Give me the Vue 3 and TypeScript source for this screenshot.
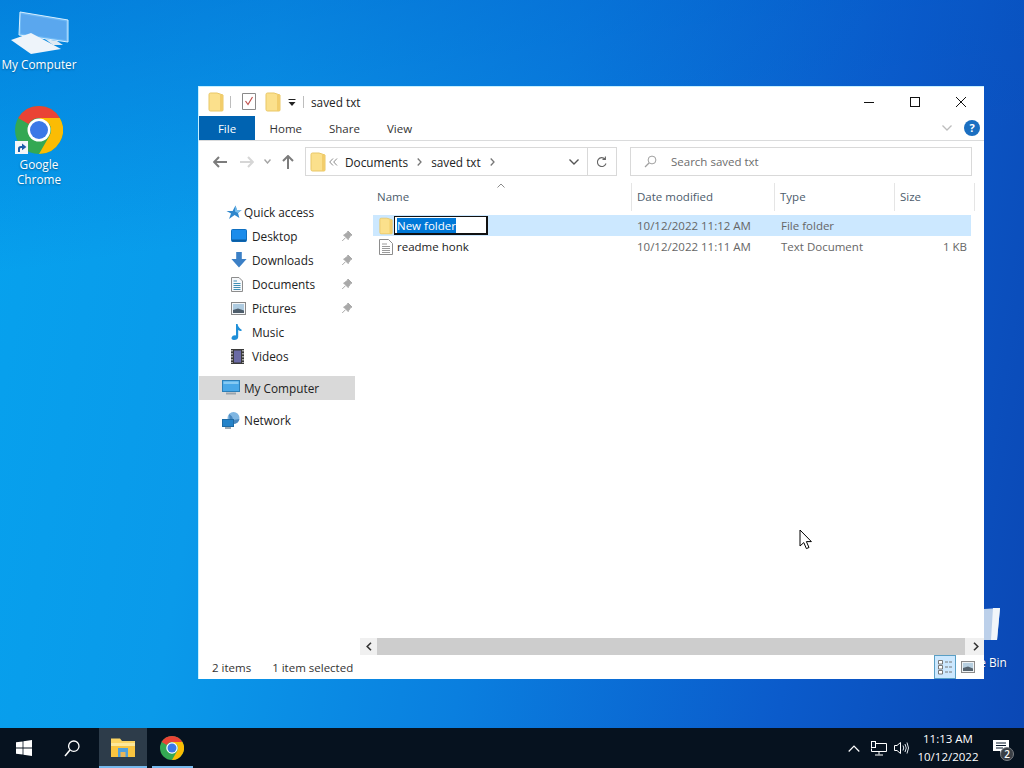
<script setup lang="ts">
const quickItems = [
  { name: 'Desktop', icon: 'desktop', pinned: true },
  { name: 'Downloads', icon: 'downloads', pinned: true },
  { name: 'Documents', icon: 'documents', pinned: true },
  { name: 'Pictures', icon: 'pictures', pinned: true },
  { name: 'Music', icon: 'music', pinned: false },
  { name: 'Videos', icon: 'videos', pinned: false },
]

const columns = [
  { label: 'Name', width: 259 },
  { label: 'Date modified', width: 143 },
  { label: 'Type', width: 120 },
  { label: 'Size', width: 80 },
]
</script>

<template>
  <div class="desktop">
    <svg width="0" height="0" class="defs">
      <symbol id="folder" viewBox="0 0 16 20">
        <path d="M1 2.5 Q1 1 2.5 1 H9 L15 3 V18 Q15 19 14 19 H2.5 Q1 19 1 17.5 Z" fill="#fbe08c" stroke="#e9c766" stroke-width="1" />
        <path d="M12 2.5 L15 3 V19 H12 Z" fill="#f2cd6b" />
      </symbol>
      <symbol id="pin" viewBox="0 0 12 12">
        <path d="M7 1 L11 5 L9.6 5.6 L7.6 8.6 L7.2 9.6 L2.6 5 L3.6 4.6 L6.4 2.4 Z M4.4 7.8 L1.2 11" fill="#a9a9a9" stroke="#a9a9a9" stroke-width="1" />
      </symbol>
      <symbol id="chrome" viewBox="0 0 48 48">
        <circle cx="24" cy="24" r="24" fill="#34a853" />
        <path d="M24 0 A24 24 0 0 1 44.8 12 H24 A12 12 0 0 0 13.6 18 L3.2 12 A24 24 0 0 1 24 0 Z" fill="#ea4335" />
        <path d="M44.8 12 A24 24 0 0 1 24 48 L34.4 30 A12 12 0 0 0 34.4 18 L24 12 Z" fill="#fbbc04" />
        <circle cx="24" cy="24" r="11.5" fill="#fff" />
        <circle cx="24" cy="24" r="9" fill="#3b78e7" />
      </symbol>
    </svg>

    <div class="desk-icon computer-icon">
      <svg width="62" height="44" viewBox="0 0 62 44">
        <path d="M11 1 L59 9 V31 L10 24 Z" fill="#6db8f5" stroke="#d8efff" stroke-width="1" />
        <path d="M12 3 L57 10.5 V29 L12 22.5 Z" fill="#5aa7ee" />
        <path d="M36 28 L48 30 L54 34 L44 34 Z" fill="#dfe9f2" />
        <path d="M2 36 L22 29 L52 45 L22 50 Z" fill="#eef4fa" transform="translate(0 -7)" />
      </svg>
      <span>My Computer</span>
    </div>

    <div class="desk-icon chrome-icon">
      <div class="chrome-wrap">
        <svg width="48" height="48"><use href="#chrome" /></svg>
        <svg class="shortcut" width="13" height="13" viewBox="0 0 13 13">
          <rect width="13" height="13" fill="#f4f6f8" />
          <path d="M3 11 V7.5 Q3 5 6 5 H7 V2.6 L11.4 6 L7 9.2 V7 H6 Q5 7 5 8.4 V11 Z" fill="#1c5ea8" />
        </svg>
      </div>
      <span>Google<br />Chrome</span>
    </div>

    <div class="desk-icon bin-icon">
      <svg width="40" height="44" viewBox="0 0 40 44">
        <path d="M4 2 L36 0 L33 32 L8 32 Z" fill="#dce7f2" fill-opacity="0.85" />
        <path d="M29 0 L36 0 L33 32 L27 32 Z" fill="#f2f6fa" />
      </svg>
      <span>Recycle Bin</span>
    </div>

    <section class="window">
      <header class="titlebar">
        <svg class="qa-folder" width="16" height="20"><use href="#folder" /></svg>
        <i class="qa-sep"></i>
        <svg class="qa-props" width="14" height="17" viewBox="0 0 14 17">
          <path d="M0.5 0.5 H13.5 V16.5 H0.5 Z" fill="#fff" stroke="#8a8a8a" />
          <path d="M3.5 8 L6 11.5 L10.5 4" fill="none" stroke="#c0504d" stroke-width="1.2" />
        </svg>
        <svg class="qa-folder2" width="16" height="20"><use href="#folder" /></svg>
        <svg class="qa-arrow" width="8" height="8" viewBox="0 0 8 8">
          <path d="M0.5 0.5 H7.5" stroke="#222" />
          <path d="M0.5 3 H7.5 L4 7 Z" fill="#222" />
        </svg>
        <i class="qa-sep last"></i>
        <span class="win-title">saved txt</span>
        <div class="win-controls">
          <svg width="12" height="12" viewBox="0 0 12 12"><path d="M1 6.5 H11" stroke="#111" /></svg>
          <svg width="12" height="12" viewBox="0 0 12 12"><rect x="1.5" y="1.5" width="9" height="9" fill="none" stroke="#111" /></svg>
          <svg width="12" height="12" viewBox="0 0 12 12"><path d="M1 1 L11 11 M11 1 L1 11" stroke="#111" /></svg>
        </div>
      </header>

      <nav class="ribbon">
        <span class="tab file">File</span>
        <span class="tab">Home</span>
        <span class="tab">Share</span>
        <span class="tab">View</span>
        <svg class="ribbon-chevron" width="10" height="6" viewBox="0 0 10 6"><path d="M0.5 0.5 L5 5 L9.5 0.5" fill="none" stroke="#bdbdbd" stroke-width="1.3" /></svg>
        <span class="help">?</span>
      </nav>

      <div class="addressbar">
        <div class="nav-buttons">
          <svg width="14" height="12" viewBox="0 0 14 12"><path d="M6 1 L1.2 6 L6 11 M1.5 6 H14" fill="none" stroke="#7c7c7c" stroke-width="2" /></svg>
          <svg width="14" height="12" viewBox="0 0 14 12"><path d="M8 1 L12.8 6 L8 11 M12.5 6 H0" fill="none" stroke="#d6d6d6" stroke-width="2" /></svg>
          <svg width="7" height="5" viewBox="0 0 7 5"><path d="M0.5 0.5 L3.5 4 L6.5 0.5" fill="none" stroke="#a4a4a4" stroke-width="1.4" /></svg>
          <svg width="12" height="14" viewBox="0 0 12 14"><path d="M1 6 L6 1 L11 6 M6 1.5 V14" fill="none" stroke="#7c7c7c" stroke-width="2" /></svg>
        </div>
        <div class="address">
          <svg width="16" height="20"><use href="#folder" /></svg>
          <svg class="crumb-more" width="9" height="8" viewBox="0 0 9 8"><path d="M4 0.5 L0.7 4 L4 7.5 M8 0.5 L4.7 4 L8 7.5" fill="none" stroke="#8a8a8a" /></svg>
          <span class="crumb">Documents</span>
          <svg class="crumb-sep" width="5" height="8" viewBox="0 0 5 8"><path d="M0.7 0.5 L4 4 L0.7 7.5" fill="none" stroke="#777" stroke-width="1.3" /></svg>
          <span class="crumb">saved txt</span>
          <svg class="crumb-sep" width="5" height="8" viewBox="0 0 5 8"><path d="M0.7 0.5 L4 4 L0.7 7.5" fill="none" stroke="#777" stroke-width="1.3" /></svg>
          <svg class="addr-down" width="10" height="6" viewBox="0 0 10 6"><path d="M0.5 0.5 L5 5 L9.5 0.5" fill="none" stroke="#555" stroke-width="1.4" /></svg>
          <span class="addr-refresh">
            <svg width="12" height="12" viewBox="0 0 12 12"><path d="M10 7.5 A4.4 4.4 0 1 1 9 3 M9.4 0.5 V3.4 H6.5" fill="none" stroke="#666" stroke-width="1.1" /></svg>
          </span>
        </div>
        <div class="search">
          <svg width="13" height="13" viewBox="0 0 13 13"><circle cx="8" cy="5" r="3.9" fill="none" stroke="#a0a0a0" /><path d="M5 8 L1 12" stroke="#a0a0a0" stroke-width="1.2" /></svg>
          <span>Search saved txt</span>
        </div>
      </div>

      <div class="main">
        <aside class="sidebar">
          <div class="nav-row group">
            <svg width="16" height="15" viewBox="0 0 16 15"><path d="M9.5 0.5 L11 5 H15.6 L12 8 L13.4 13 L8.6 10 L3 14 L5 8.6 L0.5 6 H6.6 Z" fill="#2f87cc" /><path d="M9.5 0.5 L11 5 H15.6 L12 8 L9 6.5 Z" fill="#7cc0ee" /></svg>
            <span>Quick access</span>
          </div>
          <div v-for="item in quickItems" :key="item.name" class="nav-row sub">
            <svg v-if="item.icon === 'desktop'" width="16" height="14" viewBox="0 0 16 14"><rect x="0.5" y="0.5" width="15" height="12" rx="1" fill="#1b8ceb" stroke="#0f6fc0" /><path d="M1 11.5 H15" stroke="#0a5da3" stroke-width="2" /></svg>
            <svg v-else-if="item.icon === 'downloads'" width="16" height="16" viewBox="0 0 16 16"><path d="M5.2 0 H10.8 V7 H15.6 L8 15.5 L0.4 7 H5.2 Z" fill="#3c80c6" /></svg>
            <svg v-else-if="item.icon === 'documents'" width="12" height="15" viewBox="0 0 12 15"><path d="M0.5 0.5 H8 L11.5 4 V14.5 H0.5 Z" fill="#f6f8fa" stroke="#8d8d8d" /><path d="M2.5 4 H6 M2.5 6.5 H9.5 M2.5 8.5 H9.5 M2.5 10.5 H9.5 M2.5 12.5 H9.5" stroke="#3f8fb4" /></svg>
            <svg v-else-if="item.icon === 'pictures'" width="15" height="13" viewBox="0 0 15 13"><rect x="0.5" y="0.5" width="14" height="12" fill="#f4f6f8" stroke="#888" /><rect x="2" y="2" width="11" height="9" fill="#aecbe0" /><path d="M2 8 L7 6.5 L13 8.5 V11 H2 Z" fill="#4d5d6b" /></svg>
            <svg v-else-if="item.icon === 'music'" width="12" height="16" viewBox="0 0 12 16"><path d="M5 0 H6.6 Q7 3.5 11 6 Q10 8 7.2 6 V13 Q7 16 3 16 Q0 15.6 0.6 13.4 Q1.4 11 5 11.4 Z" fill="#1f8fd8" /></svg>
            <svg v-else width="13" height="15" viewBox="0 0 13 15"><rect width="13" height="15" fill="#3a3a3a" /><rect x="3" y="1.5" width="7" height="12" fill="#6a6aa5" /><path d="M1 1 V14 M12 1 V14" stroke="#d4d4d4" stroke-dasharray="1.5 1.5" stroke-width="1.4" /></svg>
            <span>{{ item.name }}</span>
            <svg v-if="item.pinned" class="pin" width="12" height="12"><use href="#pin" /></svg>
          </div>
          <div class="nav-row group computer">
            <svg width="18" height="16" viewBox="0 0 18 16"><rect x="0.5" y="0.5" width="17" height="11" fill="#49a8e8" stroke="#2c7fb8" /><rect x="1.5" y="1.5" width="15" height="2.5" fill="#86caf3" /><path d="M4 13.5 H14" stroke="#9aa4ad" stroke-width="2" /></svg>
            <span>My Computer</span>
          </div>
          <div class="nav-row group network">
            <svg width="18" height="17" viewBox="0 0 18 17"><circle cx="11.5" cy="6" r="6" fill="#7fb6e2" /><path d="M7 2 Q11 4 11 8 L17.4 7 A6 6 0 0 1 8 11 Z" fill="#4a88bf" /><rect x="0.5" y="7.5" width="11" height="7" fill="#2583c9" stroke="#1e6ba5" /><path d="M3 16 H9" stroke="#7d8b96" stroke-width="1.5" /></svg>
            <span>Network</span>
          </div>
        </aside>

        <div class="content">
          <div class="col-header">
            <svg class="sort" width="8" height="5" viewBox="0 0 8 5"><path d="M0.5 4.5 L4 1 L7.5 4.5" fill="none" stroke="#8a8a8a" /></svg>
            <div v-for="col in columns" :key="col.label" class="col" :style="{ width: col.width + 'px' }">{{ col.label }}</div>
          </div>

          <div class="file-row selected">
            <div class="f-name">
              <svg width="14" height="18" viewBox="0 0 16 20"><use href="#folder" /></svg>
              <div class="rename"><span>New folder</span></div>
            </div>
            <div class="f-date">10/12/2022 11:12 AM</div>
            <div class="f-type">File folder</div>
            <div class="f-size"></div>
          </div>
          <div class="file-row">
            <div class="f-name">
              <svg width="14" height="16" viewBox="0 0 14 16"><path d="M0.5 0.5 H9.5 L13.5 4.5 V15.5 H0.5 Z" fill="#fff" stroke="#8d8d8d" /><path d="M3 5 H8 M3 7.5 H11 M3 9.5 H11 M3 11.5 H11 M3 13.5 H11" stroke="#9a9a9a" /></svg>
              <span class="plain">readme honk</span>
            </div>
            <div class="f-date">10/12/2022 11:11 AM</div>
            <div class="f-type">Text Document</div>
            <div class="f-size">1 KB</div>
          </div>

          <div class="hscroll">
            <span class="sb-btn"><svg width="6" height="9" viewBox="0 0 6 9"><path d="M5 0.7 L1.2 4.5 L5 8.3" fill="none" stroke="#333" stroke-width="1.6" /></svg></span>
            <div class="thumb"></div>
            <span class="sb-btn"><svg width="6" height="9" viewBox="0 0 6 9"><path d="M1 0.7 L4.8 4.5 L1 8.3" fill="none" stroke="#333" stroke-width="1.6" /></svg></span>
          </div>
        </div>
      </div>

      <footer class="statusbar">
        <span class="count">2 items</span>
        <span>1 item selected</span>
        <div class="views">
          <span class="view active">
            <svg width="17" height="16" viewBox="0 0 17 16"><path d="M1.5 1.5 H5.5 V5 H1.5 Z M1.5 6.5 H5.5 V10 H1.5 Z M1.5 11.5 H5.5 V15 H1.5 Z" fill="#fff" stroke="#777" /><path d="M8 3 H16 M8 8 H16 M8 13 H16" stroke="#777" stroke-dasharray="3 1" /></svg>
          </span>
          <span class="view">
            <svg width="14" height="12" viewBox="0 0 14 12"><rect x="0.5" y="0.5" width="13" height="11" fill="#eef2f5" stroke="#8a8a8a" /><rect x="2" y="2" width="10" height="8" fill="#b7cfe0" /><path d="M2 7 L7 5.5 L12 7.5 V10 H2 Z" fill="#56636e" /></svg>
          </span>
        </div>
      </footer>
    </section>

    <svg class="cursor" width="14" height="21" viewBox="0 0 14 21">
      <path d="M1 1 V17 L4.8 13.6 L7.4 19.6 L10 18.5 L7.4 12.6 H12.4 Z" fill="#fff" stroke="#000" stroke-width="1" />
    </svg>

    <footer class="taskbar">
      <span class="tb-btn start">
        <svg width="16" height="16" viewBox="0 0 16 16"><path d="M0 2.3 L6.6 1.4 V7.5 H0 Z M7.4 1.3 L16 0 V7.5 H7.4 Z M0 8.4 H6.6 V14.6 L0 13.7 Z M7.4 8.4 H16 V16 L7.4 14.7 Z" fill="#fff" /></svg>
      </span>
      <span class="tb-btn search-btn">
        <svg width="16" height="17" viewBox="0 0 16 17"><circle cx="9.8" cy="6.2" r="5.2" fill="none" stroke="#fff" stroke-width="1.3" /><path d="M6 10 L1 16" stroke="#fff" stroke-width="1.5" /></svg>
      </span>
      <span class="tb-btn explorer">
        <svg width="24" height="19" viewBox="0 0 24 19"><path d="M0 0.5 H9 L11 3 H24 V19 H0 Z" fill="#fcd462" /><path d="M0 5 H24 V19 H0 Z" fill="#f9c440" /><path d="M0 5 H24 V8 H0 Z" fill="#fde79a" /><path d="M7 10 H17 V19 H7 Z" fill="#4f9fdc" /><path d="M9.5 14 H14.5 V19 H9.5 Z" fill="#e8b65a" /></svg>
      </span>
      <span class="tb-btn running">
        <svg width="24" height="24"><use href="#chrome" /></svg>
      </span>
      <div class="tray">
        <svg width="12" height="7" viewBox="0 0 12 7"><path d="M0.7 6.5 L6 1 L11.3 6.5" fill="none" stroke="#fff" stroke-width="1.2" /></svg>
        <svg class="tray-net" width="16" height="15" viewBox="0 0 16 15"><path d="M4.5 2.5 H15.5 V10.5 H0.5 V7.5 M8 10.5 V13.5 M4 14 H12" fill="none" stroke="#fff" /><rect x="0.5" y="0.5" width="4" height="6" fill="#0a1a2c" stroke="#fff" /></svg>
        <svg class="tray-vol" width="15" height="14" viewBox="0 0 15 14"><path d="M0.5 4.5 H3 L6.5 1.5 V12.5 L3 9.5 H0.5 Z" fill="none" stroke="#fff" /><path d="M9 4.5 Q10.5 7 9 9.5 M11 3 Q13.5 7 11 11 M13 1.5 Q16 7 13 12.5" fill="none" stroke="#dfe6ec" /></svg>
        <div class="clock">
          <span>11:13 AM</span>
          <span>10/12/2022</span>
        </div>
        <div class="notify">
          <svg width="16" height="14" viewBox="0 0 16 14"><path d="M0 0 H16 V11 H10 L7 14 V11 H0 Z" fill="#fff" /><path d="M3 3 H13 M3 5.5 H13 M3 8 H10" stroke="#0a1a2c" /></svg>
          <span class="badge">2</span>
        </div>
      </div>
    </footer>
  </div>
</template>

<style scoped>
.desktop {
  position: relative;
  width: 1024px;
  height: 768px;
  overflow: hidden;
  font-family: 'Open Sans', 'Noto Sans', sans-serif;
  font-size: 11.5px;
  color: #1e1e1e;
  background:
    linear-gradient(172deg, rgba(0, 90, 200, 0.45) 0%, rgba(0, 90, 200, 0) 30%),
    linear-gradient(100deg, #06a2ee 0%, #0a9aea 24%, #0a7fdf 50%, #0b5bcb 78%, #0b47b4 100%);
}

.defs {
  position: absolute;
}

.desk-icon {
  position: absolute;
  display: flex;
  flex-direction: column;
  align-items: center;
  color: #fff;
  text-align: center;
  line-height: 15px;
  font-size: 11.8px;
  text-shadow: 0 1px 2px rgba(0, 0, 0, 0.35);
}

.computer-icon {
  left: 0;
  top: 11px;
  width: 78px;
}

.computer-icon svg {
  margin-left: 2px;
  margin-bottom: 2px;
}

.chrome-icon {
  left: 0;
  top: 106px;
  width: 78px;
}

.chrome-wrap {
  position: relative;
  width: 48px;
  height: 48px;
  margin-bottom: 3px;
}

.shortcut {
  position: absolute;
  left: 0;
  bottom: 0;
}

.bin-icon {
  left: 943px;
  top: 608px;
  width: 66px;
}

.bin-icon svg {
  margin-left: 16px;
  margin-bottom: 3px;
}

.window {
  position: absolute;
  left: 198px;
  top: 86px;
  width: 786px;
  height: 593px;
  display: flex;
  flex-direction: column;
  box-sizing: border-box;
  background: #fff;
  border-top: 1px solid #c6f0ff;
  border-left: 1px solid #c6f0ff;
}

.titlebar {
  position: relative;
  height: 29px;
  display: flex;
  align-items: center;
  flex-shrink: 0;
}

.qa-folder {
  margin-left: 9px;
}

.qa-sep {
  width: 1px;
  height: 12px;
  margin-left: 6px;
  background: #bdbdbd;
}

.qa-props {
  margin-left: 11px;
}

.qa-folder2 {
  margin-left: 9px;
}

.qa-arrow {
  margin-left: 7px;
  margin-top: 3px;
}

.qa-sep.last {
  margin-left: 7px;
}

.win-title {
  margin-left: 7px;
  color: #222;
  font-size: 11.8px;
}

.win-controls {
  position: absolute;
  right: 0;
  top: 0;
  height: 29px;
  display: flex;
}

.win-controls svg {
  width: 46px;
  height: 29px;
  padding: 9px 17px 8px;
  box-sizing: border-box;
}

.ribbon {
  position: relative;
  height: 24px;
  flex-shrink: 0;
  display: flex;
  align-items: center;
  border-bottom: 1px solid #dadbdc;
}

.tab {
  height: 24px;
  line-height: 25px;
  padding: 0 13.5px;
  color: #333;
}

.tab.file {
  width: 56px;
  padding: 0;
  margin-right: 1px;
  text-align: center;
  background: #0063b1;
  color: #fff;
}

.ribbon-chevron {
  margin-left: auto;
  margin-right: 12px;
}

.help {
  width: 16px;
  height: 16px;
  margin-right: 4px;
  border-radius: 50%;
  background: #1b6fc1;
  color: #fff;
  font-size: 11px;
  font-weight: 700;
  line-height: 16px;
  text-align: center;
}

.addressbar {
  height: 41px;
  flex-shrink: 0;
  display: flex;
  align-items: center;
}

.nav-buttons {
  width: 106px;
  display: flex;
  align-items: center;
  padding-left: 14px;
  box-sizing: border-box;
}

.nav-buttons svg:nth-child(2) {
  margin-left: 13px;
}

.nav-buttons svg:nth-child(3) {
  margin-left: 10px;
}

.nav-buttons svg:nth-child(4) {
  margin-left: 11px;
}

.address {
  width: 312px;
  height: 29px;
  box-sizing: border-box;
  display: flex;
  align-items: center;
  padding-left: 4px;
  border: 1px solid #d9d9d9;
}

.crumb-more {
  margin-left: 3px;
  margin-right: 7px;
}

.crumb {
  color: #222;
  font-size: 11.8px;
}

.crumb-sep {
  margin: 0 9px;
}

.addr-down {
  margin-left: auto;
  margin-right: 4px;
}

.addr-refresh {
  width: 29px;
  height: 27px;
  box-sizing: border-box;
  margin-left: 4px;
  display: flex;
  align-items: center;
  justify-content: center;
  border-left: 1px solid #d9d9d9;
}

.search {
  width: 342px;
  height: 29px;
  box-sizing: border-box;
  margin-left: 13px;
  display: flex;
  align-items: center;
  padding-left: 13px;
  border: 1px solid #d9d9d9;
  color: #6d6d6d;
}

.search span {
  margin-left: 14px;
}

.main {
  flex: 1;
  min-height: 0;
  display: flex;
}

.sidebar {
  width: 156px;
  flex-shrink: 0;
  padding-top: 18px;
  box-sizing: border-box;
}

.nav-row {
  position: relative;
  height: 24px;
  display: flex;
  align-items: center;
  color: #222;
  font-size: 11.8px;
}

.nav-row.group {
  padding-left: 27px;
}

.nav-row.group span {
  position: absolute;
  left: 45px;
}

.nav-row.sub {
  padding-left: 32px;
}

.nav-row.sub span {
  position: absolute;
  left: 53px;
}

.nav-row.computer {
  margin-top: 8px;
  padding-left: 23px;
  background: #d9d9d9;
}

.nav-row.network {
  margin-top: 8px;
  padding-left: 23px;
}

.pin {
  position: absolute;
  left: 142px;
  top: 6px;
}

.content {
  position: relative;
  flex: 1;
  min-width: 0;
  display: flex;
  flex-direction: column;
  padding-left: 18px;
}

.col-header {
  position: relative;
  height: 28px;
  margin-top: 1px;
  margin-bottom: 4px;
  display: flex;
  color: #4c5c6c;
}

.col {
  box-sizing: border-box;
  padding-left: 4px;
  line-height: 27px;
  border-right: 1px solid #e5e5e5;
}

.col:first-of-type {
  padding-left: 4px;
}

.col + .col {
  padding-left: 5px;
}

.sort {
  position: absolute;
  left: 124px;
  top: 0;
}

.file-row {
  width: 598px;
  height: 21px;
  display: flex;
  align-items: center;
  color: #666;
}

.file-row.selected {
  background: #cce8ff;
}

.f-name {
  width: 258px;
  display: flex;
  align-items: center;
  padding-left: 6px;
  box-sizing: border-box;
  color: #222;
}

.f-date {
  width: 144px;
  padding-left: 6px;
  box-sizing: border-box;
}

.f-type {
  width: 120px;
  padding-left: 6px;
  box-sizing: border-box;
}

.f-size {
  flex: 1;
  text-align: right;
  padding-right: 4px;
}

.plain {
  margin-left: 4px;
  color: #222;
}

.rename {
  width: 94px;
  height: 19px;
  box-sizing: border-box;
  margin-left: 1px;
  padding-left: 2px;
  display: flex;
  align-items: center;
  background: #fff;
  border: 2px solid #111;
  border-width: 1px 2px 2px 1px;
}

.rename span {
  background: #0078d7;
  color: #fff;
  line-height: 15px;
}

.hscroll {
  position: absolute;
  left: 5px;
  right: 0;
  bottom: 0;
  height: 17px;
  display: flex;
  background: #f0f0f0;
}

.sb-btn {
  width: 17px;
  height: 17px;
  flex-shrink: 0;
  display: flex;
  align-items: center;
  justify-content: center;
}

.thumb {
  flex: 1;
  background: #cdcdcd;
  margin-right: 2px;
}

.statusbar {
  position: relative;
  height: 24px;
  flex-shrink: 0;
  display: flex;
  align-items: center;
  padding-left: 13px;
  color: #333;
}

.count {
  margin-right: 21px;
}

.views {
  position: absolute;
  right: 6px;
  top: 0;
  display: flex;
  align-items: center;
  gap: 2px;
}

.view {
  width: 20px;
  height: 22px;
  display: flex;
  align-items: center;
  justify-content: center;
}

.view.active {
  background: #cce8ff;
  border: 1px solid #5a9fc5;
}

.cursor {
  position: absolute;
  left: 799px;
  top: 529px;
}

.taskbar {
  position: absolute;
  left: 0;
  right: 0;
  bottom: 0;
  height: 40px;
  display: flex;
  background: #06121f;
  color: #fff;
}

.tb-btn {
  position: relative;
  width: 48px;
  height: 40px;
  display: flex;
  align-items: center;
  justify-content: center;
  box-sizing: border-box;
}

.start {
  margin-right: 0;
}

.search-btn {
  margin-right: 3px;
}

.explorer {
  background: #2d3c4a;
  border-bottom: 2px solid #76b9ed;
}

.running {
  width: 50px;
}

.running::after {
  content: '';
  position: absolute;
  left: 5px;
  right: 4px;
  bottom: 0;
  height: 2px;
  background: #76b9ed;
}

.tray {
  margin-left: auto;
  display: flex;
  align-items: center;
  padding-right: 15px;
  position: relative;
}

.tray-net {
  margin-left: 11px;
}

.tray-vol {
  margin-left: 7px;
}

.clock {
  width: 74px;
  margin-left: 2px;
  display: flex;
  flex-direction: column;
  align-items: center;
  font-size: 11.5px;
  line-height: 18px;
}

.notify {
  position: relative;
  margin-left: 8px;
  width: 16px;
  height: 14px;
  margin-top: -3px;
}

.notify svg {
  display: block;
}

.badge {
  position: absolute;
  left: 7px;
  top: 7px;
  width: 14px;
  height: 14px;
  border-radius: 50%;
  background: #3a3f45;
  border: 1px solid #7a7f85;
  box-sizing: border-box;
  font-size: 10px;
  font-weight: 600;
  line-height: 12px;
  text-align: center;
}
</style>
